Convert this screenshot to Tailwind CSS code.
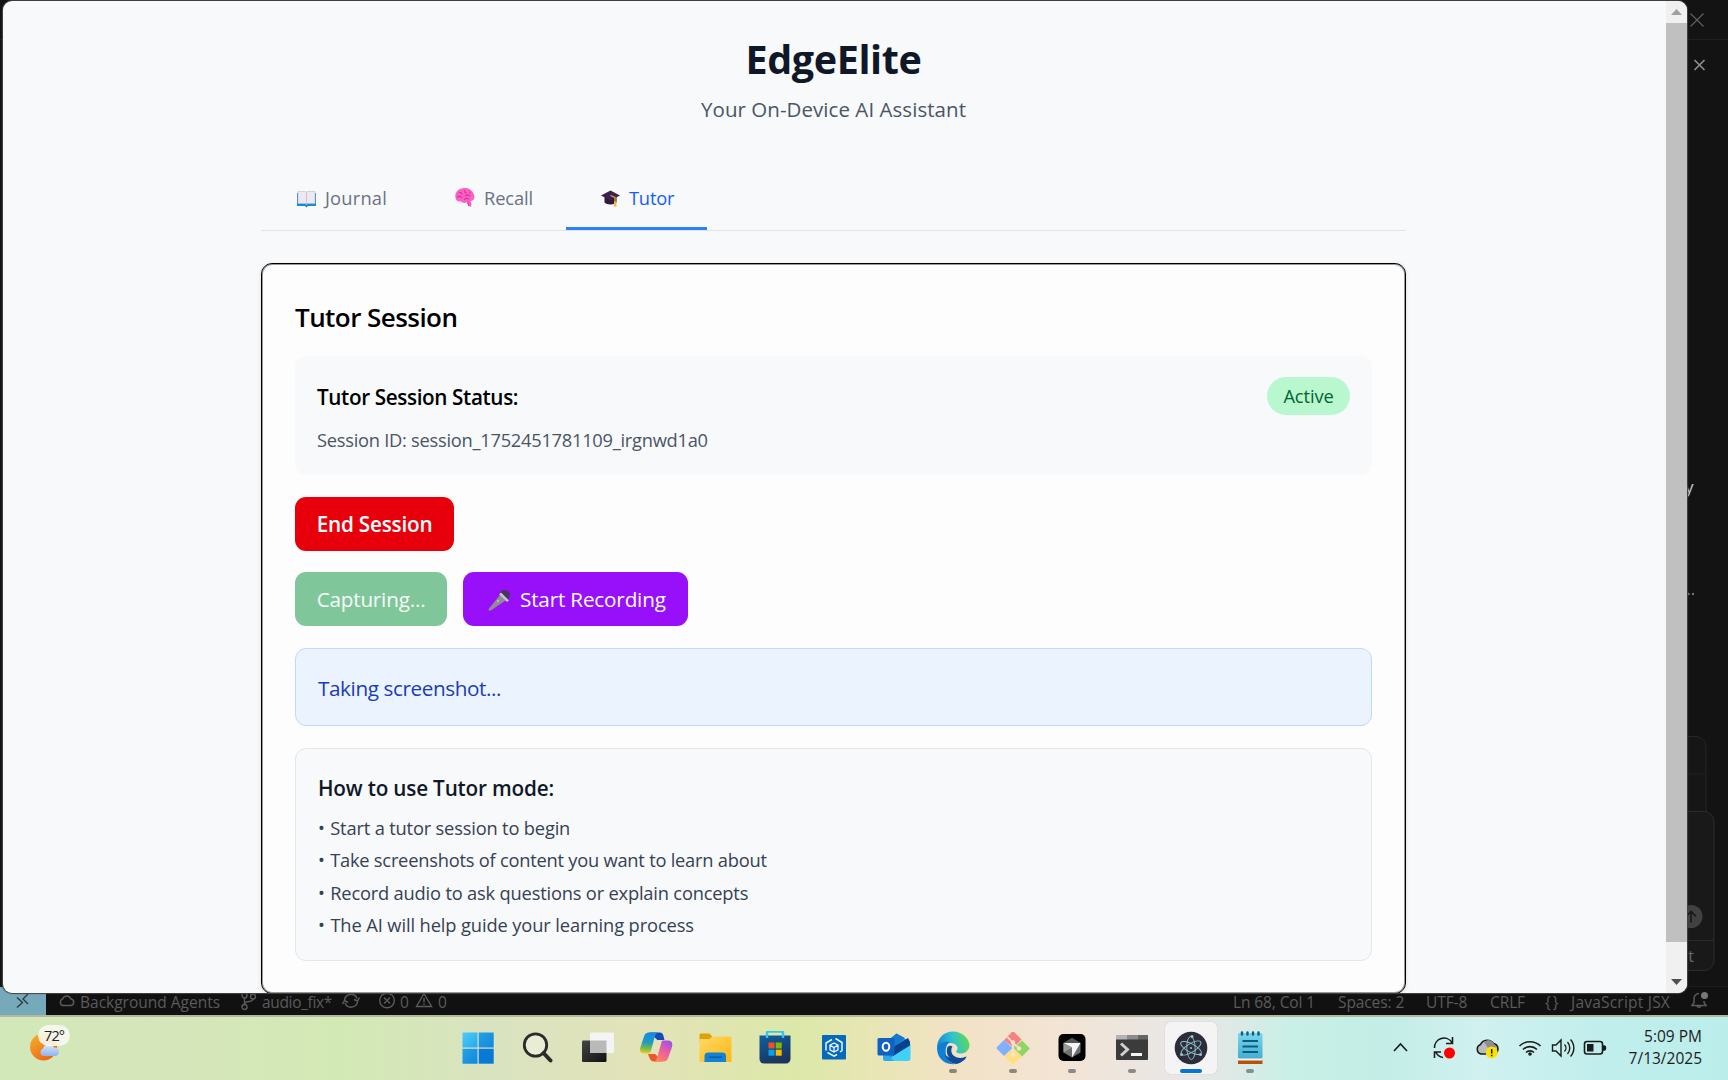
<!DOCTYPE html>
<html lang="en">
<head>
<meta charset="utf-8">
<title>EdgeElite</title>
<script src="https://cdn.jsdelivr.net/npm/@tailwindcss/browser@4"></script>
</head>
<body class="w-[1728px] h-[1080px] overflow-hidden bg-[#131313] font-['Open_Sans','Noto_Sans',sans-serif] relative flex flex-col">

<!-- editor behind the app window -->
<div class="h-[986px] shrink-0 relative bg-[#131313] overflow-hidden">
  <div class="h-10 border-b border-[#202020]"></div>
  <svg class="absolute left-[1680px] top-0" width="48" height="986" fill="none">
    <path d="M10.500 13.500l13 13m0-13l-13 13" stroke="#606060" stroke-width="1.200"/>
    <path d="M14.500 60l10 10m0-10l-10 10" stroke="#8e8e8e" stroke-width="1.700"/>
    <rect x="-40" y="736.500" width="66" height="120" rx="10" fill="#161616" stroke="#262626"/>
    <path d="M0 774h26" stroke="#212121"/>
    <rect x="-40" y="811.500" width="74" height="159" rx="10" fill="#191919" stroke="#2c2c2c"/>
    <path d="M0 940.500h34" stroke="#2a2a2a"/>
    <circle cx="11" cy="916.500" r="11.500" fill="#414141"/>
    <path d="M11 922.500v-11m-5 5l5-5 5 5" stroke="#171717" stroke-width="1.600"/>
    <circle cx="8.500" cy="594" r="1.200" fill="#777"/><circle cx="13" cy="594" r="1.200" fill="#777"/>
  </svg>
  <span class="absolute left-[1685px] top-[475px] text-[17px] leading-6 text-[#c5c9d2]">y</span>
  <span class="absolute right-[34px] top-[944px] text-[16px] leading-6 text-[#6a6a6a]">nt</span>
</div>

<!-- status bar -->
<div class="h-[29px] shrink-0 flex bg-[#111] border-t border-[#1c1c1c] text-[15.500px] text-[#5b5b5b] leading-[30px]">
  <div class="w-[46px] bg-[#76a9b9] flex justify-center">
    <svg width="46" height="29" fill="none" stroke="#2c3b40" stroke-width="1.400"><path d="M17 10.500l5.500 5-5.500 5M28 7l-5 5 5 5"/></svg>
  </div>
  <svg class="ml-3 mt-[5px]" width="18" height="19" fill="none" stroke="#5b5b5b" stroke-width="1.500"><path d="M4.500 13.500a3.500 3.500 0 0 1 0-6.500 4.500 4.500 0 0 1 8.500 0 3.300 3.300 0 0 1 0 6.500z"/></svg>
  <span class="ml-1 w-[140px] whitespace-nowrap">Background Agents</span>
  <svg class="ml-[21px] mt-[5px]" width="17" height="20" fill="none" stroke="#5b5b5b" stroke-width="1.400"><circle cx="3.500" cy="3.500" r="2.500"/><circle cx="3.500" cy="15" r="2.500"/><circle cx="12" cy="4.500" r="2.500"/><path d="M3.500 6v6.500M12 7c0 4-8.500 1-8.500 5.500"/></svg>
  <span class="ml-1 w-[72px] whitespace-nowrap tracking-[-0.340px]">audio_fix*</span>
  <svg class="ml-[7px] mt-[5px]" width="20" height="18" fill="none" stroke="#5b5b5b" stroke-width="1.500"><path d="M3.500 8a6.500 6.500 0 0 1 12.500-1.500M16.500 9.500a6.500 6.500 0 0 1-12.500 1.500M13 7.500l3.500 1.500 2-3.500M7 10.500L3.500 8.500l-2 3.500"/></svg>
  <svg class="ml-[17px] mt-[5px]" width="18" height="18" fill="none" stroke="#5b5b5b" stroke-width="1.400"><circle cx="9" cy="8.500" r="7.300"/><path d="M6 5.500l6 6m0-6l-6 6"/></svg>
  <span class="ml-1 w-[10px]">0</span>
  <svg class="ml-[5px] mt-[5px]" width="18" height="18" fill="none" stroke="#5b5b5b" stroke-width="1.400"><path d="M9 1.500L16.500 14.500H1.500zM9 6v4.500M9 11.500v1.500"/></svg>
  <span class="ml-[5px]">0</span>
  <div class="ml-auto flex whitespace-nowrap tracking-[-0.100px]">
    <span class="w-[105px]">Ln 68, Col 1</span>
    <span class="w-[88px]">Spaces: 2</span>
    <span class="w-[64px]">UTF-8</span>
    <span class="w-[55px]">CRLF</span>
    <span class="w-[26px] tracking-[2px]">{}</span>
    <span class="w-[119px] tracking-[0.220px]">JavaScript JSX</span>
  </div>
  <svg class="mr-[18px] mt-1" width="20" height="20" fill="none" stroke="#5b5b5b" stroke-width="1.500"><path d="M9 2.500a5 5 0 0 0-5 5v4l-2 3h14l-2-3V10M7 15a2.200 2.200 0 0 0 4 0"/><circle cx="14.500" cy="4.500" r="3.500" fill="#777" stroke="none"/></svg>
</div>

<!-- taskbar -->
<div class="h-[65px] shrink-0 border-t-2 border-[#b5b99b] bg-[linear-gradient(90deg,#d2e8b8_0px,#d6e6bb_150px,#d3e9b5_340px,#dae3c0_500px,#e2e3b8_640px,#dce8a8_800px,#e8e6b4_870px,#f2e2c6_960px,#f3e4d4_1060px,#e8e7e6_1180px,#dfe9e6_1230px,#c9f0e6_1290px,#c3ede6_1380px,#d0f1f0_1480px,#c0eeec_1600px,#bbeeeb_1728px)] flex items-center">
  <svg class="ml-7 self-start mt-[5px]" width="48" height="40" viewBox="28 1022 48 40">
    <defs>
      <linearGradient id="sun" x1="0" y1="0" x2=".7" y2="1"><stop stop-color="#f6b42c"/><stop offset="1" stop-color="#ee6412"/></linearGradient>
      <linearGradient id="cl" x1="0" y1="0" x2="0" y2="1"><stop stop-color="#dbe8fb"/><stop offset="1" stop-color="#8fb2ee"/></linearGradient>
    </defs>
    <circle cx="43.500" cy="1047" r="13.500" fill="url(#sun)"/>
    <path d="M43 1056a4 4 0 0 1 0-7.500 6 6 0 0 1 11-1 4.300 4.300 0 0 1 1.500 8.500z" fill="url(#cl)"/>
    <rect x="38" y="1025" width="32" height="21" rx="10.500" fill="#f8f8f0" fill-opacity=".9"/>
    <text x="44" y="1041" font-size="14.500" textLength="21" fill="#222">72°</text>
  </svg>

  <div class="ml-[372px] flex h-full">
    <!-- start -->
    <div class="w-[59.450px] flex flex-col items-center pt-[14px]"><svg width="34" height="34" viewBox="0 0 34 34"><defs><linearGradient id="w" x1="0" y1="0" x2="1" y2="1"><stop stop-color="#4ccbfa"/><stop offset="1" stop-color="#2aa8ea"/></linearGradient><linearGradient id="w2" x1="0" y1="0" x2="1" y2="1"><stop stop-color="#2fb0ee"/><stop offset="1" stop-color="#0878d4"/></linearGradient></defs><path d="M1.500 1.500h15v15h-15z" fill="url(#w)"/><path d="M17.700 1.500h15v15h-15zM1.500 17.700h15v15h-15z" fill="url(#w2)"/><path d="M17.700 17.700h15v15h-15z" fill="#0879d4"/></svg></div>
    <!-- search -->
    <div class="w-[59.450px] flex flex-col items-center pt-[14px]"><svg width="34" height="34" viewBox="0 0 34 34" fill="none" stroke="#2b2b2b"><circle cx="15.500" cy="14" r="11.200" fill="#fff" fill-opacity=".35" stroke-width="2.800"/><path d="M23.500 22l7 7.500" stroke-width="4" stroke-linecap="round"/></svg></div>
    <!-- task view -->
    <div class="w-[59.450px] flex flex-col items-center pt-[14px]"><svg width="34" height="34" viewBox="0 0 34 34"><defs><linearGradient id="tv" x1="0" y1="0" x2="1" y2="1"><stop stop-color="#444"/><stop offset="1" stop-color="#111"/></linearGradient></defs><rect x="2" y="9.500" width="24.500" height="21.500" rx="1" fill="url(#tv)"/><rect x="10" y="1.500" width="24" height="20.500" rx="1" fill="#f4f4f4"/><path d="M10 9.500h16.500V22H10z" fill="#b9b9b9"/></svg></div>
    <!-- copilot -->
    <div class="w-[59.450px] flex flex-col items-center pt-[14px]"><svg width="34" height="34" viewBox="0 0 34 34"><defs><linearGradient id="c1" x1=".3" y1="0" x2=".2" y2="1"><stop stop-color="#1689e6"/><stop offset=".45" stop-color="#1f9bc0"/><stop offset=".75" stop-color="#7bb84a"/><stop offset="1" stop-color="#f3cf1c"/></linearGradient><linearGradient id="c2" x1=".8" y1="0" x2=".2" y2="1"><stop stop-color="#a050ea"/><stop offset=".5" stop-color="#ee5f9e"/><stop offset="1" stop-color="#fb8a55"/></linearGradient></defs><path d="M10 1.500h11c3 0 3.500 3 4.500 7.500h-7z" fill="#1548b8"/><path d="M9 23h7l8 7.500H15c-3.500 0-4.500-3-6-7.500z" fill="#f0542e"/><path d="M10 1.500h9.500c-2.500 0-3.500 3-4.500 7l-3 11c-1 3-2 3-4.500 3H5c-4 0-4.500-3-3.500-6.500L5 5.500c1-3 2.500-4 5-4z" fill="url(#c1)"/><path d="M23.500 9.500H29c4 0 5 3 4 6.500l-3.500 10c-1 3-2.500 4.500-5 4.500h-10c2.500 0 3.500-3 4.500-7l3-10.500c.5-2.500 1-3.500 1.500-3.500z" fill="url(#c2)"/></svg></div>
    <!-- explorer -->
    <div class="w-[59.450px] flex flex-col items-center pt-[14px]"><svg width="34" height="34" viewBox="0 0 34 34"><defs><linearGradient id="f" x1="0" y1="0" x2="1" y2="1"><stop stop-color="#ffd968"/><stop offset="1" stop-color="#fbb812"/></linearGradient></defs><path d="M1.500 3.500a1.500 1.500 0 0 1 1.500-1h8.500l3 3.500v5h-13z" fill="#e0a007"/><path d="M1.500 8h10l3-2.500h18a1 1 0 0 1 1 1V30a1 1 0 0 1-1 1h-30a1 1 0 0 1-1-1z" fill="url(#f)"/><path d="M6.500 31v-6a3.500 3.500 0 0 1 3.500-3.500h14.500A3.500 3.500 0 0 1 28 25v6z" fill="#1282d4"/><path d="M11 26.200h13" stroke="#0a559c" stroke-width="1.200"/></svg></div>
    <!-- store -->
    <div class="w-[59.450px] flex flex-col items-center pt-[14px]"><svg width="34" height="34" viewBox="0 0 34 34"><defs><linearGradient id="s" x1="0" y1="0" x2=".4" y2="1"><stop stop-color="#0f5f9f"/><stop offset="1" stop-color="#1c355e"/></linearGradient></defs><path d="M1.500 4.500h31V28a4.500 4.500 0 0 1-4.500 4.500H6A4.500 4.500 0 0 1 1.500 28z" fill="url(#s)"/><path d="M9 7V2q0-1.500 1.500-1.500h13Q25 .5 25 2v5" fill="none" stroke="#35c3f0" stroke-width="2.400"/><path d="M10.500 11.500h6v6h-6z" fill="#f25022"/><path d="M17.700 11.500h6v6h-6z" fill="#7fba00"/><path d="M10.500 18.700h6v6h-6z" fill="#00a4ef"/><path d="M17.700 18.700h6v6h-6z" fill="#ffb900"/></svg></div>
    <!-- dev home -->
    <div class="w-[59.450px] flex flex-col items-center pt-[14px]"><svg width="34" height="34" viewBox="0 0 34 34" fill="none" stroke="#e9f6ff" stroke-width="1.500"><rect x="5" y="4" width="24" height="24.500" rx="1" fill="#0769bb" stroke="none"/><path d="M17 12l4 2.200v4.600L17 21l-4-2.200v-4.600zM13 14.200l4 2.300 4-2.300M17 16.500V21" stroke-width="1.300"/><path d="M15 8.500l-6 3.500v7.500m1.500 2l6.500 3.700 3-1.700M18.500 7.500l6.500 4v8l-2 1.500"/></svg></div>
    <!-- outlook -->
    <div class="w-[59.450px] flex flex-col items-center pt-[14px]"><svg width="34" height="34" viewBox="0 0 34 34"><path d="M6 13L19.500 2.500 33 11v16a3 3 0 0 1-3 3H9a3 3 0 0 1-3-3z" fill="#1996e0"/><path d="M8 13L19.500 2.500 28 7 14 19z" fill="#1b78cf"/><path d="M33.500 13v14a3 3 0 0 1-3 3H9z" fill="#41d0f8"/><path d="M14 17.500L31 7l2 4v3.500L16 25z" fill="#08428c"/><path d="M6 24v3a3 3 0 0 0 3 3h8l-6-6z" fill="#2ea9ea"/><rect x=".5" y="7" width="17" height="17.500" rx="1.500" fill="#0f62c0"/><ellipse cx="9" cy="15.800" rx="3.300" ry="4" fill="none" stroke="#fff" stroke-width="2"/></svg></div>
    <!-- edge -->
    <div class="w-[59.450px] flex flex-col items-center pt-[14px]"><svg width="34" height="34" viewBox="0 0 34 34"><defs><linearGradient id="e1" x1="0" y1=".6" x2="1" y2=".4"><stop stop-color="#1684d8"/><stop offset=".5" stop-color="#2fc0d2"/><stop offset="1" stop-color="#5edc4c"/></linearGradient></defs><path d="M1 17C1 7 8 .5 17 .5S33 7 33.500 14c0 6-5 8.500-9 8.500-3 0-5-1.500-4-2.500 3-4-1-8-6-8-7 0-12 3-13.500 5z" fill="url(#e1)"/><path d="M1 17c1-4 6-7 13-6-6 3-7 19 5 22C9 34.500 1 27 1 17z" fill="#0f7fd6"/><path d="M11.500 16c-2.500 7 2 14 10 15.500 4 .5 8-3 9-6-6 3-14 1-15-4.500-.5-2 0-4 1-5.500-2-1.500-4-.5-5 .5z" fill="#0f4c98"/><path d="M9 23c1 5 5 9 11 10 4-.5 8-3.500 10.500-7.500C24 30 13 29 9 23z" fill="#0f4c98"/></svg><i class="mt-[4px] w-2 h-1 rounded-full bg-[#8b8678]"></i></div>
    <!-- git -->
    <div class="w-[59.450px] flex flex-col items-center pt-[14px]"><svg width="34" height="34" viewBox="0 0 34 34"><path d="M8 9.300L15.500 1.500Q17 .2 18.500 1.500L25.500 8.500 17.500 16.500z" fill="#f88080"/><path d="M26 9.500l7 7q1 1 0 2l-7 7-8.500-8.500z" fill="#92d464"/><path d="M25.500 25.500l-7 7q-1.500 1.200-3 0l-7-7L17 17z" fill="#ffe07c"/><path d="M8 25l-7-7q-1-1 0-2l7-7 8.500 8z" fill="#80b0ff"/><path d="M11.500 6L17 12v12M17 12l7 6" stroke="#f2e4d0" stroke-width="1.800" fill="none"/><circle cx="17" cy="11.500" r="2.200" fill="#f2e4d0"/><circle cx="23" cy="17.500" r="2.200" fill="#f2e4d0"/><circle cx="17" cy="24" r="2.400" fill="#f2e4d0"/></svg><i class="mt-[4px] w-2 h-1 rounded-full bg-[#8b8880]"></i></div>
    <!-- cursor -->
    <div class="w-[59.450px] flex flex-col items-center pt-[14px]"><svg width="34" height="34" viewBox="0 0 34 34"><rect x="3.500" y="3" width="27" height="27" rx="5" fill="#000"/><path d="M17 7l8.500 5v9.500L17 26.500 8.500 21.500V12z" fill="#6f6f6f"/><path d="M17 7l8.500 5h-17z" fill="#555"/><path d="M8.500 12h17L17 26.500V16.500z" fill="#f4f4f4"/><path d="M8.500 12l8.500 4.500-8.500 5z" fill="#999"/></svg><i class="mt-[4px] w-2 h-1 rounded-full bg-[#8b8885]"></i></div>
    <!-- terminal -->
    <div class="w-[59.450px] flex flex-col items-center pt-[14px]"><svg width="34" height="34" viewBox="0 0 34 34"><path d="M1 4h32v24a1 1 0 0 1-1 1H2a1 1 0 0 1-1-1z" fill="#3b3b3b"/><path d="M1 4h11v4.500H1z" fill="#b3b3b3"/><path d="M12 4h11v4.500H12z" fill="#8b8b8b"/><path d="M23 4h10v4.500H23z" fill="#666"/><path d="M6 12.500l6.500 6-6.500 6" fill="none" stroke="#d0d0d0" stroke-width="3"/><path d="M16 22h11v3H16z" fill="#f3f3f3"/></svg><i class="mt-[4px] w-2 h-1 rounded-full bg-[#8a8a88]"></i></div>
    <!-- electron -->
    <div class="w-[59.450px] flex flex-col items-center pt-[5px]"><div class="w-[52px] h-[52px] rounded-[5px] bg-[#f3f4f3] shadow-[0_0_1px_#aaa] flex flex-col items-center pt-[9px]"><svg width="34" height="34" viewBox="0 0 34 34"><circle cx="17" cy="17" r="16.300" fill="#2b2e3a"/><g fill="none" stroke="#94c4cc" stroke-width=".9"><ellipse cx="17" cy="17" rx="11.500" ry="4.200" transform="rotate(28 17 17)"/><ellipse cx="17" cy="17" rx="11.500" ry="4.200" transform="rotate(88 17 17)"/><ellipse cx="17" cy="17" rx="11.500" ry="4.200" transform="rotate(148 17 17)"/></g><g fill="#94c4cc"><circle cx="17" cy="17" r="1.100"/><circle cx="7.500" cy="23.500" r="1.500"/><circle cx="26.500" cy="23.500" r="1.500"/><circle cx="18" cy="5.500" r="1.500"/></g></svg><i class="mt-[4px] w-[22px] h-1 rounded-full bg-[#0a74d2]"></i></div></div>
    <!-- notepad -->
    <div class="w-[59.450px] flex flex-col items-center pt-[14px]"><svg width="34" height="34" viewBox="0 0 34 34"><defs><linearGradient id="n" x1="0" y1="0" x2="0" y2="1"><stop stop-color="#78d6ee"/><stop offset="1" stop-color="#45aed2"/></linearGradient></defs><path d="M5 28h24.500v5H5z" fill="#b45309"/><path d="M5 27h24.500v2.500H5z" fill="#f4f4f4"/><rect x="5" y="2" width="24.500" height="25.500" rx="1.500" fill="url(#n)"/><g stroke="#0b5e80" stroke-width="2.400" stroke-linecap="round"><path d="M9 1.500v2M14.500 1.500v2M20 1.500v2M25.500 1.500v2"/></g><path d="M9.500 10h15.500M9.500 15.500h15.500M9.500 21h15.500" stroke="#0b5e80" stroke-width="2"/></svg><i class="mt-[4px] w-2 h-1 rounded-full bg-[#7e9490]"></i></div>
  </div>

  <svg class="ml-[108px] mb-[3px]" width="232" height="34" viewBox="1388 1030 232 34" fill="none" stroke="#1b1b1b" stroke-width="1.600">
    <path d="M1394 1051l6.500-7 6.500 7"/>
    <path d="M1434.500 1048a9.500 9.500 0 0 1 17.500-5.500M1452.500 1037v6.500h-6.500M1443 1057.500a9.500 9.500 0 0 1-7-5M1434.500 1058v-6h6.500"/>
    <circle cx="1449.500" cy="1053" r="5.500" fill="#f00" stroke="none"/>
    <path d="M1481 1054a5 5 0 0 1-.5-9.500 7.500 7.500 0 0 1 13-1 5.500 5.500 0 0 1 1 10.500z" fill="#b9bcbc"/><path d="M1484 1042a6 6 0 0 1 10 2l2 3-6 4z" fill="#8d8f8f" stroke="none"/>
    <circle cx="1491.700" cy="1052.500" r="6" fill="#fbe000" stroke="none"/><path d="M1491.700 1049v4.500m0 1.200v1.500" stroke-width="1.500"/>
    <path d="M1519.500 1046a15 15 0 0 1 21 0M1523 1049.500a10 10 0 0 1 14 0M1526 1052.500a5.800 5.800 0 0 1 8 0"/><circle cx="1530" cy="1054" r="1.800" fill="#1b1b1b" stroke="none"/>
    <path d="M1552.500 1045h3.500l5-5v16l-5-5h-3.500zM1564.500 1044.500a5 5 0 0 1 0 7M1567.500 1042a9 9 0 0 1 0 12M1570.500 1039.500a12.500 12.500 0 0 1 0 17" stroke-width="1.400"/>
    <rect x="1584.500" y="1041.500" width="18" height="12.500" rx="2.500"/><path d="M1587 1044h6.500v7.500h-6.500z" fill="#1b1b1b" stroke="none"/><path d="M1603 1046h1.500q1 0 1 2t-1 2h-1.500z" fill="#1b1b1b"/>
  </svg>
  <div class="ml-auto mr-[26px] mb-1 text-right text-[15.500px] leading-[22px] text-[#1c1c1c] whitespace-nowrap">
    <div>5:09 PM</div><div>7/13/2025</div>
  </div>
</div>

<!-- app window -->
<div class="absolute left-[3px] top-px w-[1684px] h-[992px] rounded-[9px] overflow-hidden bg-[#f7f9fb] flex shadow-[0_0_1px_1px_#444]">
  <div class="flex-1 pl-[258px] whitespace-nowrap">
    <header class="w-[1145px] flex flex-col items-center pt-[33px]">
      <h1 class="text-[39.500px] leading-[50px] font-bold text-[#101828] tracking-[-0.400px]">EdgeElite</h1>
      <p class="mt-[9px] text-[20.500px] leading-8 text-[#4a5565] tracking-[0.050px]">Your On-Device AI Assistant</p>
    </header>
    <nav class="mt-9 w-[1145px] h-[70px] border-b border-[#e2e4e8] flex text-[18.300px] font-medium text-[#6a7282]">
      <div class="w-[159px] pl-[35px] pt-1 flex items-center">
        <svg class="mt-0.5" width="21" height="20" viewBox="0 0 21 20"><path d="M1 4h19v13h-8l-1.500 1.500L9 17H1z" fill="#128fd2"/><path d="M2 2.500h7q1.500 0 1.500 1v12q0-1-1.500-1H2zM19 2.500h-7q-1.500 0-1.500 1v12q0-1 1.500-1h7z" fill="#eee8f3" stroke="#c4bccb" stroke-width=".6"/></svg>
        <span class="ml-2 tracking-[0.200px]">Journal</span>
      </div>
      <div class="w-[146px] pl-[34px] pt-1 flex items-center">
        <svg width="22" height="21" viewBox="0 0 22 21"><path d="M11 1c4 0 7 2 8.500 5.500 1.500 3 1 6-1 7-1 .5-2 .5-2 .5l1 3-.5 3-2-1-2-4c-2 1.500-5 1-6-.5-3 .5-5.500-1-5.500-4C.500 6 4 1 11 1z" fill="#fb61c4"/><path d="M5 5.500c2-.5 3 .5 3 2M11 3c-1 2 0 3 2 3M3 10c2-1 4-.5 5 1M11 9c2-1.500 4-1 5 .5M10 13c1-1.500 3-2 5-1M16 4.500v2M13.500 15l1.500 4" stroke="#dc2e9a" stroke-width="1.100" fill="none"/></svg>
        <span class="ml-2 tracking-[-0.100px]">Recall</span>
      </div>
      <div class="w-[141px] pl-[34px] pt-[7px] border-b-[3px] border-[#2b7fff] text-[#155dfc] flex items-center">
        <svg class="mt-0.5" width="22" height="20" viewBox="0 0 22 20"><path d="M4.500 8v5.500c2 2.500 10 2.500 12 0V8z" fill="#2d1a3c"/><path d="M10.500 1.500L20 6.500 10.500 11.500 1 6.500z" fill="#3b2350"/><path d="M10.500 6.500l4.500 2V17" stroke="#f5a433" stroke-width="1.300" fill="none"/><path d="M14 12.500h2l.7 5h-3z" fill="#f9b43b"/></svg>
        <span class="ml-[7px] tracking-[-0.200px]">Tutor</span>
      </div>
    </nav>
    <main class="mt-8 w-[1145px] h-[731px] rounded-[11px] border border-black bg-[#fdfdfd] shadow-[0_1px_4px_rgba(0,0,0,0.12),inset_0_0_0_1px_rgba(0,0,0,0.4)] px-[33px] pt-[33px] flex flex-col">
      <h2 class="text-[26px] leading-[40px] font-semibold text-black tracking-[-0.550px]">Tutor Session</h2>
      <section class="mt-[19px] h-[119px] rounded-[11px] bg-[#f7f9fb] px-[22px] pt-[21px]">
        <div class="flex justify-between items-start">
          <h3 class="text-[20.700px] leading-[41px] font-semibold text-black tracking-[-0.370px]">Tutor Session Status:</h3>
          <span class="w-[83px] h-[38px] rounded-full bg-[#b9f8cf] text-[#016630] text-[18.300px] leading-[38px] text-center tracking-[-0.100px]">Active</span>
        </div>
        <p class="mt-[8px] text-[18.300px] leading-[27px] text-[#4a5565] tracking-[-0.260px]">Session ID: session_1752451781109_irgnwd1a0</p>
      </section>
      <button class="mt-[22px] w-[159px] h-[54px] pt-0.5 rounded-[11px] bg-[#e7000b] text-white text-[20.700px] font-semibold tracking-[-0.200px]">End Session</button>
      <div class="mt-[21px] flex gap-4">
        <button class="w-[152px] h-[54px] pt-0.5 rounded-[11px] bg-[#80c69b] text-[#f7fcf9] text-[20.700px] tracking-[-0.200px]">Capturing...</button>
        <button class="w-[225px] h-[54px] pt-0.5 rounded-[11px] bg-[#980ffa] text-white text-[20.700px] pl-6 flex items-center tracking-[-0.180px]">
          <svg width="24" height="24" viewBox="0 0 24 24"><path d="M2 20.500L13 7l5.500 5.500L4.500 22q-1.500 1-2.500.500-.8-1 0-2z" fill="#8d8d92"/><path d="M12.500 7q0-4 4-5 4-.5 6 2.500 1.500 5-3.500 8z" fill="#4a3560"/><path d="M12 6.500l2-2 8 8-2 1.500z" fill="#c6c6ca"/><circle cx="11" cy="13" r="1" fill="#c6c6ca"/></svg>
          <span class="ml-[9px]">Start Recording</span>
        </button>
      </div>
      <div class="mt-[22px] h-[78px] rounded-[11px] border border-[#bedbff] bg-[#ebf3fe] px-[22px] leading-[78px] text-[20.700px] text-[#193cb8] tracking-[-0.400px]">Taking screenshot...</div>
      <section class="mt-[22px] h-[213px] rounded-[11px] border border-[#e3e6ea] bg-[#f7f9fb] px-[22px] pt-[23px]">
        <h3 class="text-[20.700px] leading-[32px] font-semibold text-[#101828] tracking-[-0.180px]">How to use Tutor mode:</h3>
        <ul class="mt-[8px] text-[18.300px] leading-[32.400px] text-[#364153]">
          <li class="tracking-[-0.180px]"><span class="mr-px">•</span> Start a tutor session to begin</li>
          <li class="tracking-[-0.230px]"><span class="mr-px">•</span> Take screenshots of content you want to learn about</li>
          <li class="tracking-[-0.190px]"><span class="mr-px">•</span> Record audio to ask questions or explain concepts</li>
          <li class="tracking-[-0.110px]"><span class="mr-px">•</span> The AI will help guide your learning process</li>
        </ul>
      </section>
    </main>
  </div>
  <div class="w-[21px] bg-[#f0f0f0] flex flex-col items-center">
    <svg width="21" height="22"><path d="M5 14h11l-5.500-6z" fill="#a0a0a0"/></svg>
    <div class="w-full h-[919px] bg-[#c0c0c0]"></div>
    <svg width="21" height="51"><path d="M5 37h11l-5.500 6z" fill="#505050"/></svg>
  </div>
</div>
</body>
</html>
